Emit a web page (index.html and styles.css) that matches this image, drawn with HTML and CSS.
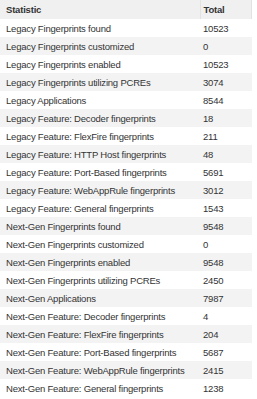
FILE: index.html
```html
<!DOCTYPE html>
<html>
<head>
<meta charset="utf-8">
<link rel="stylesheet" href="styles.css">
</head>
<body>
<div class="wrap">
<table class="stats">
<thead>
<tr><th class="c1">Statistic</th><th class="c2">Total</th></tr>
</thead>
<tbody>
<tr><td>Legacy Fingerprints found</td><td>10523</td></tr>
<tr><td>Legacy Fingerprints customized</td><td>0</td></tr>
<tr><td>Legacy Fingerprints enabled</td><td>10523</td></tr>
<tr><td>Legacy Fingerprints utilizing PCREs</td><td>3074</td></tr>
<tr><td>Legacy Applications</td><td>8544</td></tr>
<tr><td>Legacy Feature: Decoder fingerprints</td><td>18</td></tr>
<tr><td>Legacy Feature: FlexFire fingerprints</td><td>211</td></tr>
<tr><td>Legacy Feature: HTTP Host fingerprints</td><td>48</td></tr>
<tr><td>Legacy Feature: Port-Based fingerprints</td><td>5691</td></tr>
<tr><td>Legacy Feature: WebAppRule fingerprints</td><td>3012</td></tr>
<tr><td>Legacy Feature: General fingerprints</td><td>1543</td></tr>
<tr><td>Next-Gen Fingerprints found</td><td>9548</td></tr>
<tr><td>Next-Gen Fingerprints customized</td><td>0</td></tr>
<tr><td>Next-Gen Fingerprints enabled</td><td>9548</td></tr>
<tr><td>Next-Gen Fingerprints utilizing PCREs</td><td>2450</td></tr>
<tr><td>Next-Gen Applications</td><td>7987</td></tr>
<tr><td>Next-Gen Feature: Decoder fingerprints</td><td>4</td></tr>
<tr><td>Next-Gen Feature: FlexFire fingerprints</td><td>204</td></tr>
<tr><td>Next-Gen Feature: Port-Based fingerprints</td><td>5687</td></tr>
<tr><td>Next-Gen Feature: WebAppRule fingerprints</td><td>2415</td></tr>
<tr><td>Next-Gen Feature: General fingerprints</td><td>1238</td></tr>
</tbody>
</table>
</div>
</body>
</html>
```
FILE: styles.css
```css
html, body {
  margin: 0;
  padding: 0;
  background: #fff;
}
.wrap {
  width: 252px;
}
.stats {
  width: 252px;
  border-collapse: collapse;
  table-layout: fixed;
  font-family: "Liberation Sans", Arial, sans-serif;
  font-size: 9.5px;
  letter-spacing: -0.2px;
  color: #333;
}
.stats th {
  height: 19px;
  padding: 0 0 0 6px;
  text-align: left;
  font-weight: bold;
  background: #f0f0f0;
  border-right: 1px solid #e2e2e2;
  box-sizing: border-box;
}
.stats .c1 { width: 200px; }
.stats td {
  height: 18px;
  padding: 0 0 0 6px;
  white-space: nowrap;
  overflow: hidden;
}
.stats td + td { padding-left: 3px; }
.stats th.c2 { padding-left: 3px; }
.stats tbody tr:nth-child(even) td {
  background: #f3f3f3;
}
```
